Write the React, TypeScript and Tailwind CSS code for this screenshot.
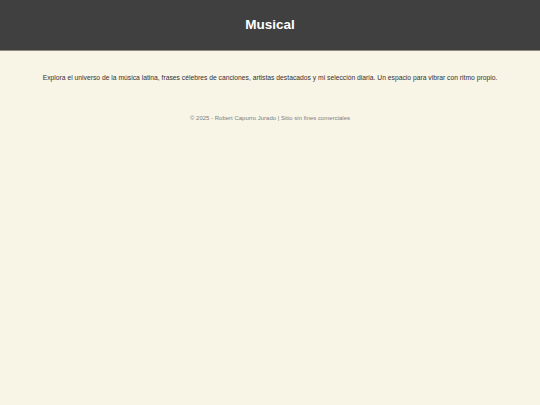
export default function App() {
  return (
    <div className="min-h-[405px] bg-[#f8f4e6] font-['Liberation_Sans',Arial,sans-serif] antialiased">
      <header className="h-[51px] bg-[#404040] border-b border-[#8a8a80] flex items-center justify-center">
        <h1 className="text-white text-[13.5px] font-bold">Musical</h1>
      </header>
      <main className="pt-[22px] px-4 text-center">
        <p className="text-[6.75px] text-[#333]">
          Explora el universo de la música latina, frases célebres de canciones, artistas destacados y mi selección diaria. Un espacio para vibrar con ritmo propio.
        </p>
      </main>
      <footer className="mt-[31px] text-center text-[6px] text-[#808080]">
        © 2025 - Robert Capurro Jurado | Sitio sin fines comerciales
      </footer>
    </div>
  )
}
